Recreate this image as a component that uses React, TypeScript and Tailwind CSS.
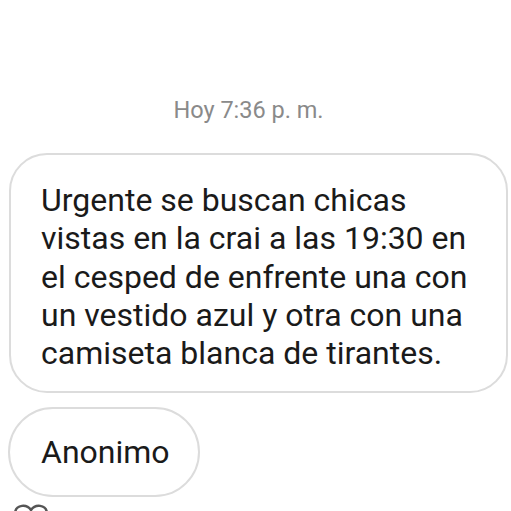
import React from "react";

export default function App() {
  return (
    <div
      className="w-[511px] h-[511px] bg-white overflow-hidden relative"
      style={{ fontFamily: "Roboto, 'Liberation Sans', sans-serif" }}
    >
      <div className="pt-[96px] pr-[14px] text-center text-[23.5px] leading-[28px] text-[#8a8a8a]">
        Hoy 7:36 p. m.
      </div>
      <div className="mt-[29px] ml-[9px] w-[499px] h-[240px] rounded-[38px] border-2 border-[#dcdcdc] pl-[30px] pr-4 pt-[26px] text-[32px] leading-[38.3px] text-[#1a1a1a]">
        Urgente se buscan chicas
        <br />
        vistas en la crai a las 19:30 en
        <br />
        el cesped de enfrente una con
        <br />
        un vestido azul y otra con una
        <br />
        camiseta blanca de tirantes.
      </div>
      <div className="mt-[14px] ml-[8px] w-[192px] h-[90px] rounded-[45px] border-2 border-[#dcdcdc] flex items-center pl-[31px] text-[32px] text-[#1a1a1a]">
        Anonimo
      </div>
      <svg className="absolute left-[13px] top-[504px]" width="36" height="30" viewBox="0 0 36 30" fill="none" stroke="#555" strokeWidth="2.5">
        <path d="M18 6 C14 0 3 0 2 9 C2 16 10 22 18 28 C26 22 34 16 34 9 C33 0 22 0 18 6 Z" />
      </svg>
    </div>
  );
}
